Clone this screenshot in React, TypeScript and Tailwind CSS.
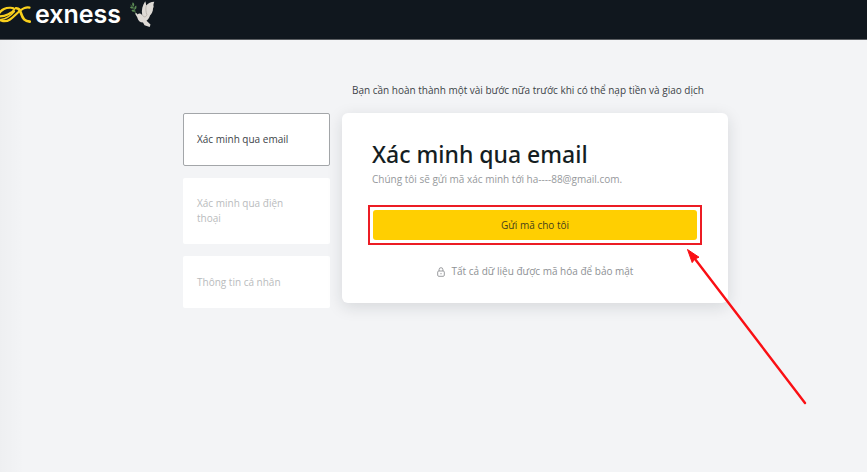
import React from 'react';

type Step = {
  id: string;
  label: string;
};

const steps: Step[] = [
  { id: 'email', label: 'Xác minh qua email' },
  { id: 'phone', label: 'Xác minh qua điện thoại' },
  { id: 'profile', label: 'Thông tin cá nhân' },
];

export default function App() {
  return (
    <div className="relative min-h-screen overflow-hidden bg-[#f3f4f6] font-['Open_Sans','Noto_Sans',sans-serif] text-[10px] leading-[15px] text-[#3d4348]">
      <Header />
      <div className="absolute bottom-0 left-0 top-10 w-6 bg-linear-to-r from-black/2 to-transparent" />
      <main className="flex justify-center pl-11 pt-[43px]">
        <div className="grid grid-cols-[147px_386px] gap-x-3 gap-y-[15px]">
          <p className="col-start-2 pl-[10px]">
            Bạn cần hoàn thành một vài bước nữa trước khi có thể nạp tiền và giao dịch
          </p>
          <StepList active="email" />
          <VerifyCard />
        </div>
      </main>
    </div>
  );
}

function Header() {
  return (
    <header className="h-10 border-b border-[#5b5e62] bg-[#10171e]">
      <a href="#" className="flex h-7 items-center text-white">
        <LogoMark />
        <span className="ml-1 font-['Inter',sans-serif] text-[25px] font-semibold leading-7">exness</span>
        <Dove />
      </a>
    </header>
  );
}

function StepList({ active }: { active: string }) {
  return (
    <ol className="flex flex-col gap-3">
      {steps.map((step) => (
        <li
          key={step.id}
          className={`flex min-h-[52px] items-center rounded-xs bg-white py-[18px] pr-8 ${
            step.id === active ? 'border border-[#a3a6a9] pl-[13px]' : 'pl-[14px] text-[#b9bbbd]'
          }`}
        >
          {step.label}
        </li>
      ))}
    </ol>
  );
}

function VerifyCard() {
  return (
    <section className="relative self-start rounded-md bg-white px-[26px] pb-6 pt-[23px] shadow-[0_4px_16px_rgba(20,30,40,0.13)]">
      <h1 className="px-1 font-['Noto_Sans',sans-serif] text-[23px] font-medium leading-9 text-[#141d22]">
        Xác minh qua email
      </h1>
      <p className="px-1 text-[#96999c]">Chúng tôi sẽ gửi mã xác minh tới ha----88@gmail.com.</p>
      <div className="mt-[18px] border-2 border-[#ec1c24] p-[3px]">
        <button type="button" className="block h-[30px] w-full rounded-[3px] bg-[#ffcf01] text-[#463f1c]">
          Gửi mã cho tôi
        </button>
      </div>
      <p className="mt-[19px] flex items-center justify-center gap-[7px] text-[#8e9194]">
        <LockIcon />
        Tất cả dữ liệu được mã hóa để bảo mật
      </p>
      <Arrow />
    </section>
  );
}

function LockIcon() {
  return (
    <svg width="8" height="10" viewBox="0 0 8 10" fill="none" stroke="currentColor" strokeWidth="0.9">
      <rect x="0.7" y="4" width="6.6" height="5.3" rx="1.1" />
      <path d="M2.1 4V2.6a1.9 1.9 0 0 1 3.8 0V4M4 6v1.3" />
    </svg>
  );
}

function Arrow() {
  return (
    <svg className="pointer-events-none absolute left-[344px] top-[135px]" width="122" height="160" viewBox="0 0 122 160">
      <path d="M9 11L119 155" stroke="#fa0f14" strokeWidth="2.4" strokeLinecap="round" />
      <path d="M1.5 1.5L13 9.2L8.8 11L6.2 14.6Z" fill="#fa0f14" stroke="#fa0f14" strokeWidth="1" />
    </svg>
  );
}

function LogoMark() {
  return (
    <svg width="31" height="28" viewBox="0 0 31 28" fill="none" stroke="#f9cf1c" strokeLinecap="round">
      <path d="M-1 16.500C5 16.500 13 12.500 14 9.600C14.500 7.500 8 7 4 9C0 11 -2 14 -1.500 17.500C-.8 21.800 6 22.200 10 19.500C15.500 15.800 19 10 24.500 8C26.500 7.300 28 7.300 29.500 7.600" strokeWidth="2.2" />
      <path d="M16 8.200C19.500 8 20 10.500 21.300 14C22.800 18.600 24.500 21.200 29.800 21.600" strokeWidth="2.6" />
      <path d="M1 19.500C6 19 11 15.500 14.500 11.500" strokeWidth="1.3" />
    </svg>
  );
}

function Dove() {
  return (
    <svg className="ml-2" width="27" height="28" viewBox="0 0 27 28">
      <path d="M8.500 14.500C10 12.800 12 13.500 13.200 15C12.200 10 13.500 5.500 16.200 1.300C17 3 17 4 17.200 5.500C19 3 22 2 25.300 1.700C24.700 3.200 24.500 4.200 24.400 5.500C25 5.800 24.500 7.500 24 8.500C24.200 11 22.500 14 21 15.500C20.500 17.500 19 19.500 17.500 20.800L21.500 24.500L20.700 27L15.500 25.200L14 22.500C11 22.500 9 20.500 8.200 17.200L6 13.500C6.500 12.600 7.800 13 8.500 14.500Z" fill="#dedad5" />
      <path d="M17.200 5.500C16.500 9 17 12 17.800 14.500M18 14.500C17 17 15.500 18 13.200 15" fill="none" stroke="#aaa59e" strokeWidth="0.7" />
      <path d="M6.500 13.500C6 10 4.500 7 1.500 5" fill="none" stroke="#496d45" strokeWidth="1" />
      <path d="M1 7C2.500 6 3.700 6.500 4.600 8.300C2.600 9 1.500 8.500 1 7ZM3.800 2.300C5.500 3.500 5.700 5 4.500 6.800C3 5.500 2.800 4 3.800 2.300ZM7.200 5.500C7.900 7.600 7.300 9 5.700 9.800C4.900 8 5.500 6.500 7.200 5.500ZM2.500 10.200C4.200 9.300 5.500 9.800 6.200 11.500C4.500 12.200 3.200 11.800 2.500 10.200Z" fill="#5b8a54" />
    </svg>
  );
}
